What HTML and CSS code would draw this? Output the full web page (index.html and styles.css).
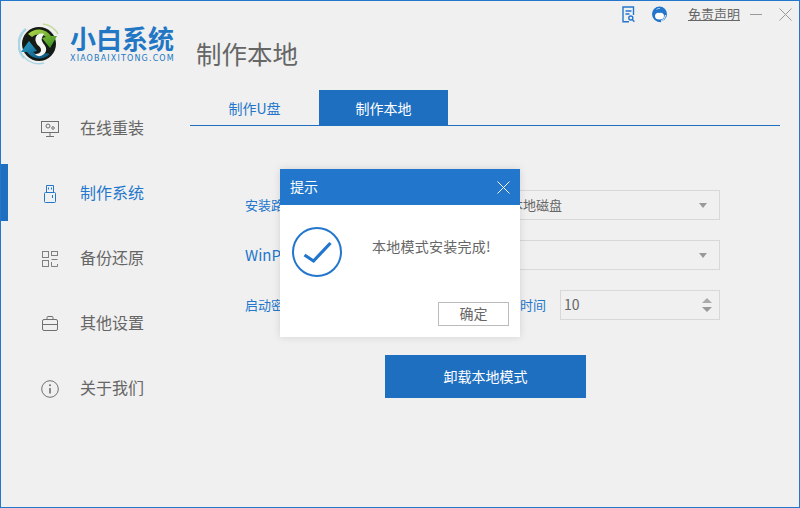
FILE: index.html
```html
<!DOCTYPE html>
<html lang="zh-CN">
<head>
<meta charset="utf-8">
<title>小白系统</title>
<link rel="stylesheet" href="styles.css">
</head>
<body>
<div class="app">
  <aside class="sidebar">
    <div class="brand">
      <svg class="brand-mark" width="44" height="44" viewBox="0 0 44 44">
        <defs>
          <linearGradient id="gGreen" x1="0" y1="0" x2="1" y2="1"><stop offset="0" stop-color="#b5d84a"/><stop offset="1" stop-color="#2f8a1e"/></linearGradient>
          <linearGradient id="gBlue" x1="0" y1="0" x2="1" y2="1"><stop offset="0" stop-color="#2aa0c8"/><stop offset="1" stop-color="#0b4f78"/></linearGradient>
        </defs>
        <path d="M6 36A20 20 0 0 1 8 7" fill="none" stroke="#a9d5e4" stroke-width="2.5"/>
        <path d="M6 35A20 20 0 0 0 26 41" fill="none" stroke="#a9d5e4" stroke-width="1.5"/>
        <path d="M25 2A20 20 0 0 1 40 12" fill="none" stroke="#c4d99a" stroke-width="1.5"/>
        <circle cx="21" cy="22" r="17" fill="#141a14"/>
        <path d="M10 12A15 15 0 0 1 33 14L39 14L32 26L24 16L28 15A10 10 0 0 0 14 15Z" fill="url(#gGreen)"/>
        <path d="M32 32A15 15 0 0 1 9 30L3 30L11 19L19 29L15 30A10 10 0 0 0 28 31Z" fill="url(#gBlue)"/>
        <path d="M26 12C20 10 16 15 18 20C19 24 23 24 23 28C23 31 20 32 17 32C20 36 26 34 28 29C29 24 25 22 24 19C23 16 25 14 26 12Z" fill="#f4f6f4"/>
      </svg>
      <div class="brand-text">
        <div class="brand-name">小白系统</div>
        <div class="brand-url">XIAOBAIXITONG.COM</div>
      </div>
    </div>
    <nav class="nav">
      <div class="nav-item">
        <span class="nav-mark"></span>
        <svg class="nav-icon" width="18" height="16" viewBox="0 0 18 16" fill="none" stroke="#707070"><rect x=".5" y=".5" width="17" height="11"/><circle cx="7" cy="5" r="2"/><circle cx="12" cy="7" r="1.3"/><path d="M9 12v3M5 15.500h8"/></svg>
        <span class="nav-label">在线重装</span>
      </div>
      <div class="nav-item is-active">
        <span class="nav-mark"></span>
        <svg class="nav-icon" width="18" height="18" viewBox="0 0 18 18" fill="none" stroke="#2277cc"><path d="M5.500 7.500v-7h7v7"/><path d="M7.500 2.500v2M10.500 2.500v2"/><rect x="3.500" y="7.500" width="11" height="10" rx="1"/><path d="M11.500 10v3"/></svg>
        <span class="nav-label">制作系统</span>
      </div>
      <div class="nav-item">
        <span class="nav-mark"></span>
        <svg class="nav-icon" width="18" height="16" viewBox="0 0 18 16" fill="none" stroke="#808080"><rect x="1.500" y=".5" width="6" height="6"/><rect x="1.500" y="9.500" width="6" height="6"/><rect x="10.500" y=".5" width="6" height="4"/><path d="M10.500 8.500h6M10.500 11v4.500h6V13"/></svg>
        <span class="nav-label">备份还原</span>
      </div>
      <div class="nav-item">
        <span class="nav-mark"></span>
        <svg class="nav-icon" width="18" height="15" viewBox="0 0 18 15" fill="none" stroke="#707070"><rect x="1.500" y="3.500" width="15" height="11" rx="1.500"/><path d="M6 3.500V1.500a1 1 0 0 1 1-1h4a1 1 0 0 1 1 1v2M1.500 8.500h15"/></svg>
        <span class="nav-label">其他设置</span>
      </div>
      <div class="nav-item">
        <span class="nav-mark"></span>
        <svg class="nav-icon" width="18" height="18" viewBox="0 0 18 18" fill="none" stroke="#707070"><circle cx="9" cy="9" r="8.300"/><path d="M9 8v5.500" stroke-width="1.600"/><circle cx="9" cy="5.300" r="1" fill="#707070" stroke="none"/></svg>
        <span class="nav-label">关于我们</span>
      </div>
    </nav>
  </aside>

  <main class="main">
    <div class="toolbar">
      <svg class="tool-doc" width="13" height="17" viewBox="0 0 13 17" fill="none" stroke="#2277cc" stroke-width="1.400"><path d="M7 15.800H1V1h10.500v8"/><path d="M3.500 5h6M3.500 8h4"/><circle cx="8.800" cy="12" r="2"/><path d="M10.300 13.500l2 2.200"/></svg>
      <svg class="tool-help" width="17" height="17" viewBox="0 0 17 17"><circle cx="8.500" cy="8" r="7.500" fill="#2277cc"/><ellipse cx="8.500" cy="10" rx="4.500" ry="3.500" fill="#fff"/><path d="M3.500 9C5 6 7 5.500 8.500 7C10 5.500 12 6 13.500 9L13.500 5.500L8.500 3L3.500 5.500Z" fill="#2277cc"/><path d="M5.500 3.500A4 4 0 0 1 9 2.500" fill="none" stroke="#a9cdf0"/><path d="M2.500 9C3 13.500 6 15.500 10 15.500" fill="none" stroke="#2277cc" stroke-width="1.500"/><path d="M14.500 9C14 12 12.500 14 10 15" fill="none" stroke="#fff"/></svg>
      <a class="tool-link">免责声明</a>
      <span class="tool-min"></span>
      <svg class="tool-close" width="13" height="13" viewBox="0 0 13 13" fill="none" stroke="#999"><path d="M.5.500l12 12M12.500.500l-12 12"/></svg>
    </div>
    <h1 class="page-title">制作本地</h1>
    <div class="tabs">
      <div class="tab">制作U盘</div>
      <div class="tab is-active">制作本地</div>
    </div>
    <div class="form">
      <div class="form-row">
        <label class="form-label">安装路径</label>
        <div class="field field-select field-wide"><span class="field-value">本地磁盘</span><span class="caret"></span></div>
      </div>
      <div class="form-row">
        <label class="form-label form-label-latin">WinPE版本</label>
        <div class="field field-select field-wide"><span class="caret"></span></div>
      </div>
      <div class="form-row">
        <label class="form-label">启动密码</label>
        <div class="field field-pass"></div>
        <label class="form-label form-label-end">超时时间</label>
        <div class="field field-number"><span class="field-num">10</span><span class="spin"><i class="spin-up"></i><i class="caret"></i></span></div>
      </div>
      <button class="primary" type="button">卸载本地模式</button>
    </div>
  </main>

  <div class="dialog">
    <div class="dialog-head">
      <span class="dialog-title">提示</span>
      <svg width="13" height="13" viewBox="0 0 13 13" fill="none" stroke="#fff"><path d="M.5.500l12 12M12.500.500l-12 12"/></svg>
    </div>
    <div class="dialog-body">
      <svg width="50" height="50" viewBox="0 0 50 50" fill="none" stroke="#2277cc"><circle cx="25" cy="25" r="24" stroke-width="2"/><path d="M12.500 28l9 6 17-18" stroke-width="3.200"/></svg>
      <p class="dialog-msg">本地模式安装完成!</p>
    </div>
    <div class="dialog-foot"><button class="ok" type="button">确定</button></div>
  </div>
</div>
</body>
</html>
```
FILE: styles.css
```css
* { box-sizing: border-box; }
html, body { margin: 0; padding: 0; }
body {
  width: 800px;
  height: 508px;
  overflow: hidden;
  font-family: "Noto Sans CJK SC", "Noto Sans", sans-serif;
  font-weight: 400;
  color: #666;
  background: #f0f0f0;
}
.app {
  position: relative;
  display: flex;
  width: 800px;
  height: 508px;
  border: 1px solid #2277cc;
  background: #f0f0f0;
}
.sidebar { width: 189px; flex: none; }
.brand {
  display: flex;
  align-items: flex-start;
  height: 95px;
  padding: 21px 0 0 17px;
}
.brand-mark { flex: none; }
.brand-text { margin: 1px 0 0 8px; }
.brand-name {
  font-size: 26px;
  line-height: 30px;
  font-weight: 700;
  color: #2277c4;
  white-space: nowrap;
}
.brand-url {
  margin-top: 1px;
  font-family: "DejaVu Sans", sans-serif;
  font-size: 8px;
  line-height: 10px;
  letter-spacing: 1.150px;
  color: #2277c4;
  white-space: nowrap;
}
.nav-item {
  display: flex;
  align-items: center;
  height: 65px;
  font-size: 16px;
  color: #666;
}
.nav-item.is-active { color: #2277cc; }
.nav-mark { width: 7px; height: 57px; flex: none; margin-bottom: 2px; }
.is-active .nav-mark { background: #1f6fc0; }
.nav-icon { flex: none; margin-left: 33px; margin-right: 21px; }
.nav-label { margin-bottom: 4px; }

.main { flex: 1; min-width: 0; }
.toolbar {
  display: flex;
  align-items: center;
  justify-content: flex-end;
  height: 26px;
  padding-right: 7px;
}
.tool-doc { margin-right: 16px; }
.tool-help { margin-right: 20px; }
.tool-link {
  font-size: 13px;
  color: #666;
  text-decoration: underline;
  margin: 0 10px 2px 0;
}
.tool-min { width: 12px; height: 1px; background: #999; margin-right: 17px; }
.page-title {
  margin: 0 0 0 6px;
  height: 54px;
  font-size: 25.500px;
  line-height: 52px;
  font-weight: 400;
  color: #666;
}
.tabs {
  display: flex;
  height: 36px;
  margin: 9px 19px 0 0;
  border-bottom: 1px solid #1f6fc0;
}
.tab {
  width: 129px;
  font-size: 14px;
  line-height: 36px;
  text-align: center;
  color: #2277cc;
}
.tab.is-active { background: #1f6fc0; color: #fff; }
.form { padding: 64px 0 0 55px; }
.form-row {
  display: flex;
  align-items: center;
  height: 30px;
  margin-bottom: 20px;
}
.form-label {
  width: 70px;
  flex: none;
  margin-bottom: 2px;
  font-size: 13px;
  color: #2277cc;
  white-space: nowrap;
}
.form-label-latin { font-size: 15px; }
.form-label-end { width: 80px; padding-left: 14px; }
.field {
  display: flex;
  align-items: center;
  height: 30px;
  border: 1px solid #d8d8d8;
  font-size: 14px;
  color: #666;
}
.field-wide { width: 405px; padding-right: 12px; justify-content: flex-end; }
.field-value { margin: 0 auto 2px 0; padding-left: 194px; font-size: 13px; }
.field-num { margin-bottom: 2px; }
.field-pass { width: 165px; }
.field-number { width: 160px; padding: 0 7px 0 3px; justify-content: space-between; }
.caret {
  display: block;
  width: 0;
  height: 0;
  border-style: solid;
  border-width: 5px 4px 0;
  border-color: #999 transparent transparent;
}
.spin { display: flex; flex-direction: column; gap: 4px; }
.spin .caret { border-width: 5px 5px 0; }
.spin-up {
  display: block;
  width: 0;
  height: 0;
  border-style: solid;
  border-width: 0 5px 5px;
  border-color: transparent transparent #aaa;
}
.primary {
  display: block;
  width: 201px;
  height: 43px;
  margin: 35px 0 0 140px;
  padding: 0 0 2px;
  border: 0;
  background: #1f6fc0;
  color: #fff;
  font: inherit;
  font-size: 14px;
}
.dialog {
  position: absolute;
  left: 279px;
  top: 168px;
  display: flex;
  flex-direction: column;
  width: 240px;
  height: 168px;
  background: #fff;
  box-shadow: 0 0 8px rgba(0, 0, 0, .12);
}
.dialog-head {
  display: flex;
  align-items: center;
  justify-content: space-between;
  height: 36px;
  padding: 0 10px;
  background: #2277cc;
  color: #fff;
  font-size: 14px;
}
.dialog-title { margin-bottom: 2px; }
.dialog-body { display: flex; padding: 22px 0 0 12px; }
.dialog-msg {
  margin: 0 0 0 30px;
  font-size: 14px;
  line-height: 38px;
  letter-spacing: .25px;
  color: #666;
  white-space: nowrap;
}
.dialog-foot {
  display: flex;
  justify-content: flex-end;
  margin-top: auto;
  padding: 0 11px 11px 0;
}
.ok {
  width: 71px;
  height: 24px;
  padding: 0 0 2px;
  border: 1px solid #bbb;
  background: #fff;
  color: #666;
  font: inherit;
  font-size: 14px;
}
```
